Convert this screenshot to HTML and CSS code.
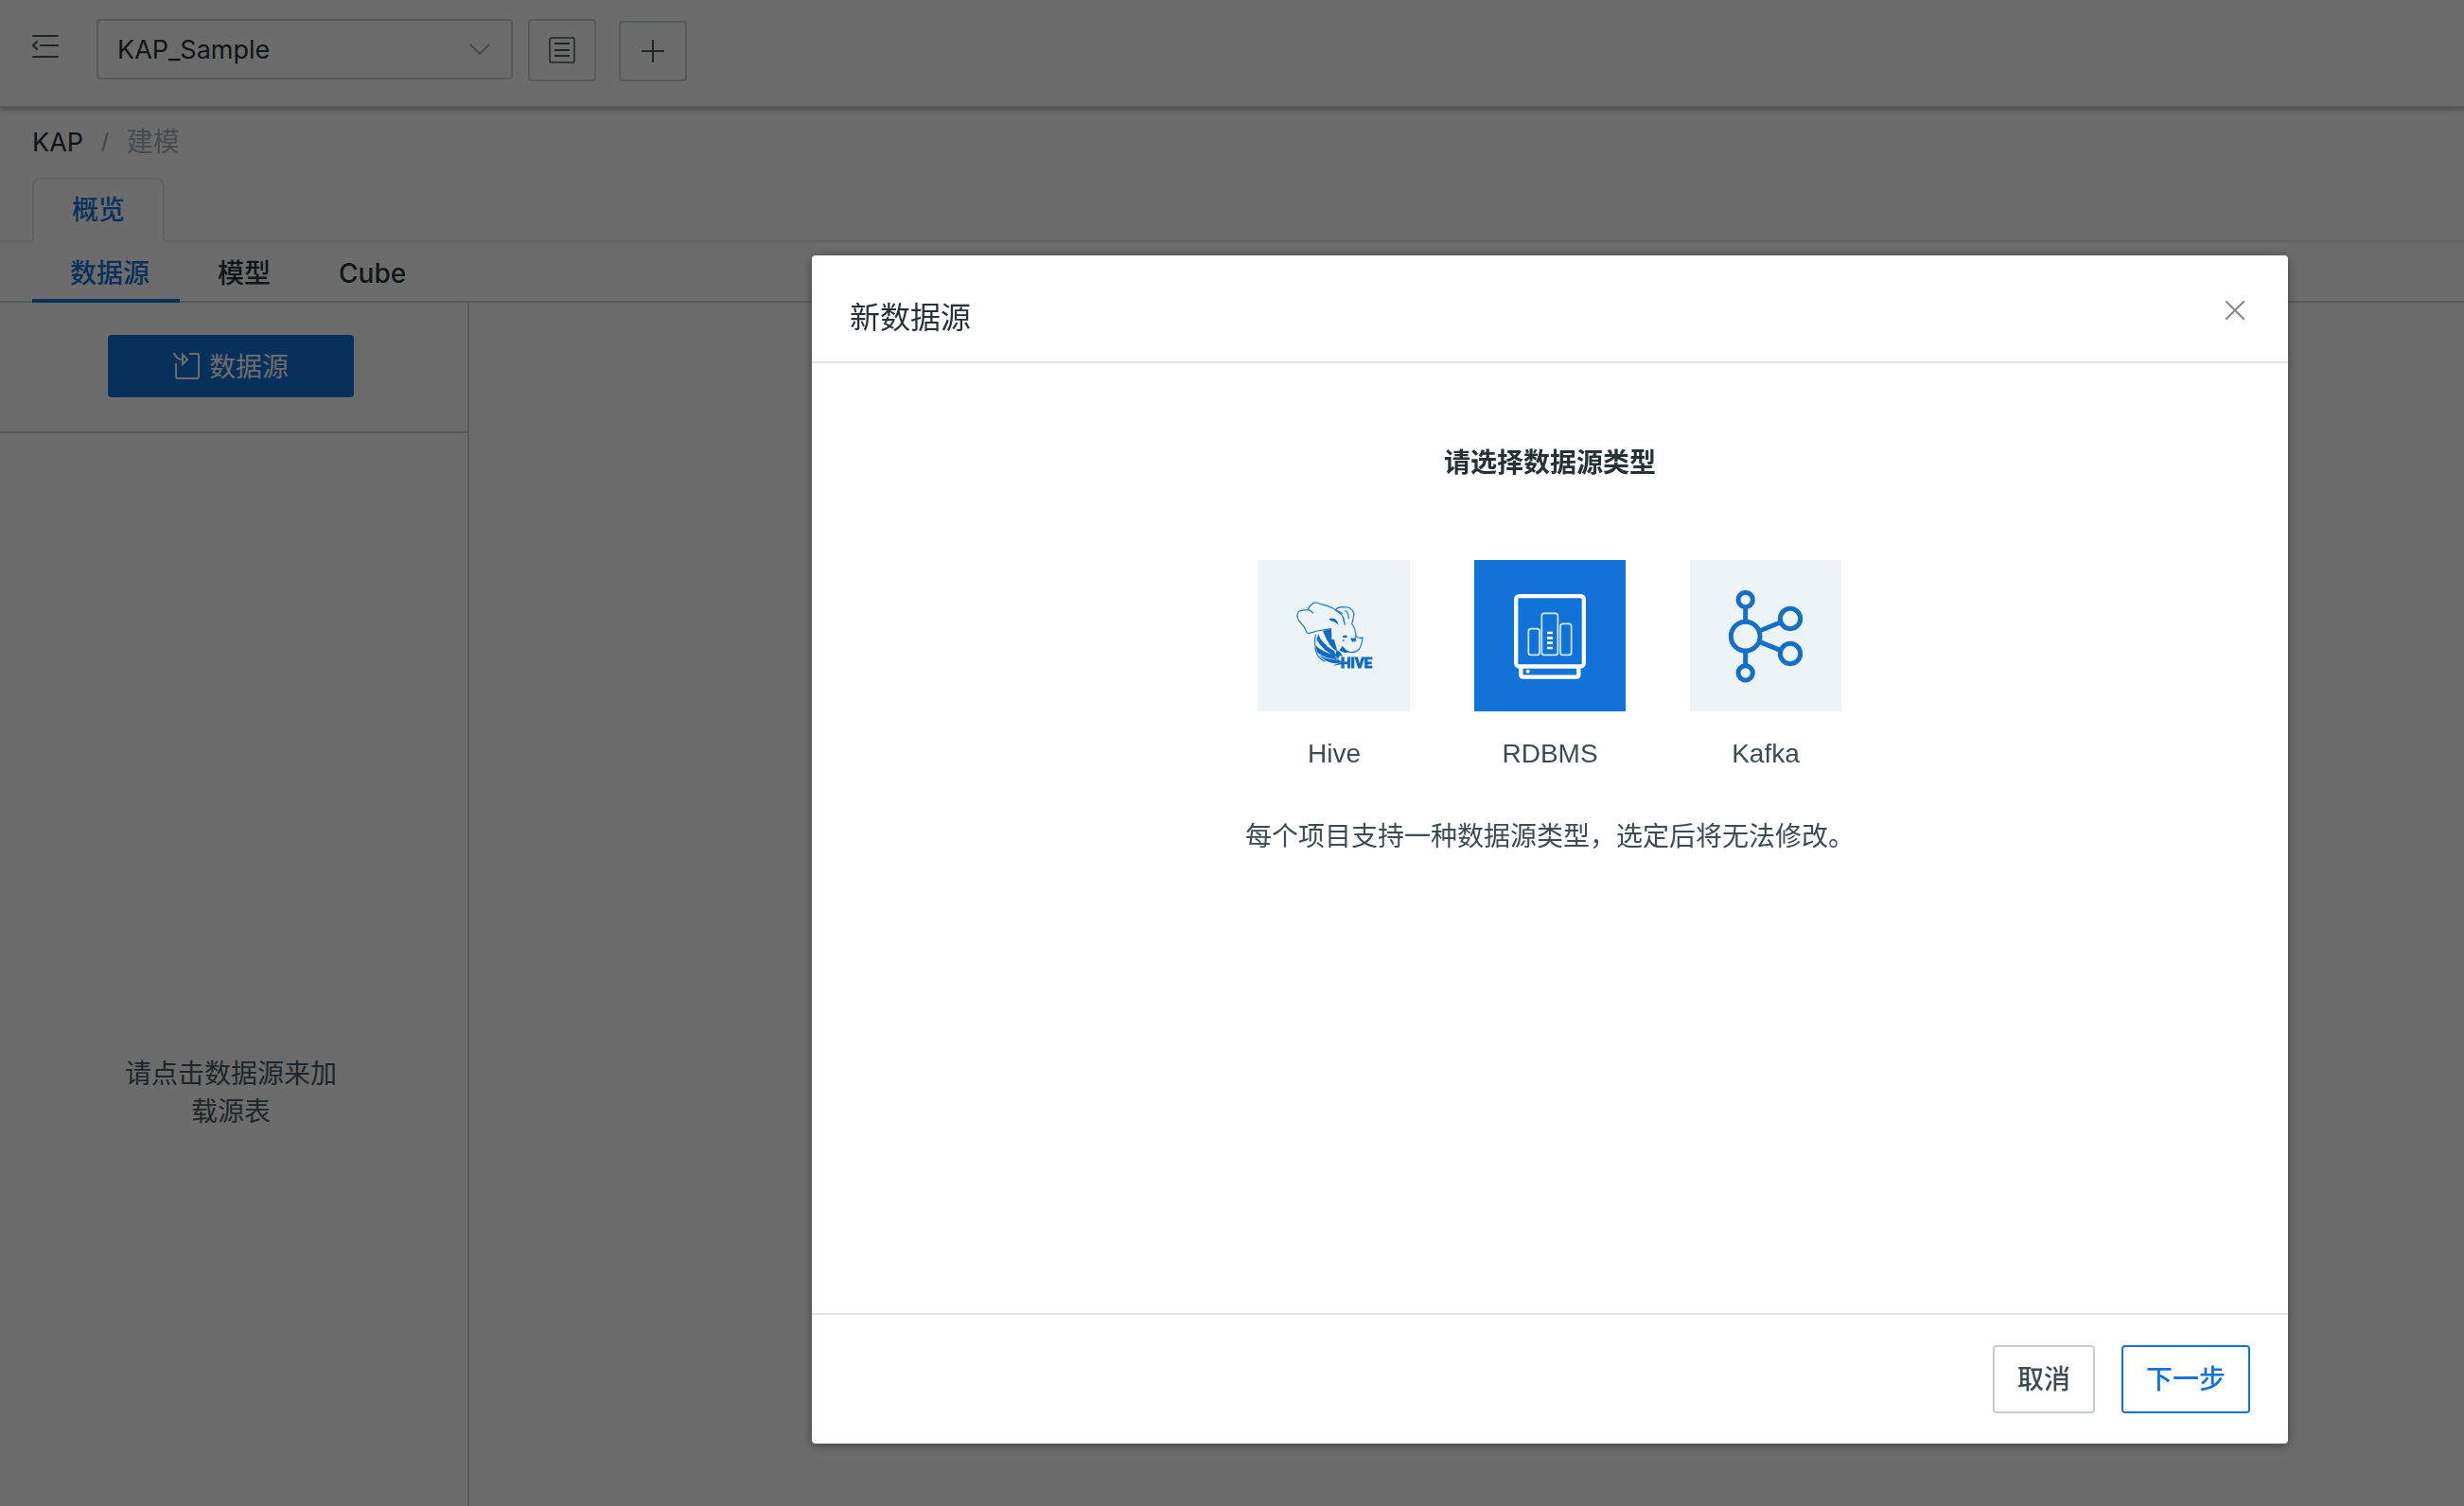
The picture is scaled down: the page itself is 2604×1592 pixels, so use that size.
FILE: index.html
```html
<!DOCTYPE html>
<html lang="zh-CN">
<head>
<meta charset="utf-8">
<title>KAP</title>
<link rel="stylesheet" href="styles.css">
</head>
<body>
<div class="app">
  <header class="topbar">
    <button class="menu-toggle" type="button" aria-label="收起菜单">
      <svg width="28" height="26" viewBox="0 0 28 26" fill="none" stroke="currentColor" stroke-width="2" stroke-linecap="round"><path d="M1 2h26M9 12h18M1 24h26M5 8l-4 4 4 4"/></svg>
    </button>
    <div class="project">
      <select class="project-select" aria-label="项目"><option>KAP_Sample</option></select>
      <svg class="project-arrow" width="22" height="12" viewBox="0 0 22 12" fill="none" stroke="currentColor" stroke-width="2"><path d="M1 1l10 10L21 1"/></svg>
    </div>
    <button class="tool tool-list" type="button" aria-label="项目列表">
      <svg width="28" height="28" viewBox="0 0 28 28" fill="none" stroke="currentColor" stroke-width="2"><rect x="1" y="1" width="26" height="26" rx="2" stroke-width="1.5"/><path d="M6 7h16M6 14h16M6 20h16"/></svg>
    </button>
    <button class="tool tool-add" type="button" aria-label="新建项目">
      <svg width="24" height="24" viewBox="0 0 24 24" fill="none" stroke="currentColor" stroke-width="2"><path d="M12 0v24M0 12h24"/></svg>
    </button>
  </header>

  <nav class="breadcrumb" aria-label="位置">
    <a class="crumb" href="#">KAP</a>
    <span class="crumb-slash">/</span>
    <span class="crumb-current">建模</span>
  </nav>

  <div class="card-tabs"><button class="card-tab" type="button">概览</button></div>

  <nav class="line-tabs">
    <a class="line-tab is-active" href="#">数据源</a>
    <a class="line-tab" href="#">模型</a>
    <a class="line-tab" href="#">Cube</a>
  </nav>

  <main class="workspace">
    <aside class="sidebar">
      <div class="sidebar-head">
        <button class="source-button" type="button">
          <svg width="28" height="30" viewBox="0 0 28 30" fill="none" stroke="currentColor" stroke-width="2"><path d="M17 2h8q2 0 2 2v22q0 2-2 2H5q-2 0-2-2V12M1 1q2 7 9 7V3l5 5-5 5V8"/></svg>
          <span class="source-label">数据源</span>
        </button>
      </div>
      <p class="sidebar-empty">请点击数据源来加载源表</p>
    </aside>
    <section class="canvas"></section>
  </main>
</div>

<div class="overlay">
  <div class="dialog" role="dialog" aria-modal="true" aria-labelledby="dialog-title">
    <div class="dialog-head">
      <h2 class="dialog-title" id="dialog-title">新数据源</h2>
      <button class="dialog-close" type="button" aria-label="关闭">
        <svg width="20" height="20" viewBox="0 0 20 20" fill="none" stroke="currentColor" stroke-width="2"><path d="M0 0l20 20M20 0L0 20"/></svg>
      </button>
    </div>
    <div class="dialog-body">
      <h3 class="prompt">请选择数据源类型</h3>
      <div class="types">
        <button class="type" type="button">
          <svg class="type-icon" viewBox="0 0 160 160" fill="none">
            <g transform="translate(20 23) scale(.33333)" stroke="#1a78d0" stroke-width="3.5" stroke-linejoin="round" stroke-linecap="round">
              <path d="M101 163L94 162Q88 152 85 143L70 126Q58 108 66 96Q70 90 96 89Q100 78 114 67Q122 64 134 70L158 76Q178 83 190 94L204 105Q212 117 212 130M96 89Q108 92 113 99M101 163L126 156L170 149"/>
              <path d="M184 89Q192 80 205 80L223 81Q236 84 243 101Q240 120 236 134Q248 148 249 174M186 91L206 100M216 92Q226 100 226 116M208 112Q212 128 214 136"/>
              <path d="M249 172Q260 182 270 176Q270 195 260 213Q248 226 229 223L205 216M234 181L246 186M247 175L243 190"/>
              <path d="M121 168Q116 195 123 222Q128 242 150 252"/>
              <g fill="#116bc4" stroke="none">
                <path d="M164 117Q180 112 190 126L194 138Q184 126 168 123zM208 170h13v7h-14zM206 184h7l-2 4h-5zM196 218L206 204 218 216 229 223 214 225zM232 178l16 2 3 8-8-2-6 6z"/>
                <path d="M144 156L171 149L172 182Q184 182 181 189L187 209L190 222Q162 205 144 156z"/>
                <path d="M130 166Q137 194 180 220L188 238Q146 222 124 183z"/>
                <path d="M120 201Q143 223 180 232L190 246Q154 246 127 225z"/>
                <path d="M134 233Q160 248 194 247L206 256L184 259Q151 255 134 233z"/>
                <path d="M176 266Q194 255 214 253L202 262zM188 216l12 8 8 14-10-4-6 12-8-12z"/>
              </g>
            </g>
            <text class="hive-word" x="87" y="114">HIVE</text>
          </svg>
          <span class="type-name">Hive</span>
        </button>
        <button class="type is-selected" type="button">
          <svg class="type-icon" viewBox="0 0 160 160" fill="none">
            <g transform="translate(2 3) scale(.33333)" stroke="#fff">
              <rect x="126.500" y="105.500" width="215" height="223" rx="10" stroke-width="13"/>
              <path d="M142 334v20q0 8 8 8h167q8 0 8-8v-20" stroke-width="13"/>
              <g stroke-width="5" stroke="#d6ebfa"><rect x="166" y="209" width="35" height="83" rx="8"/><rect x="208" y="160" width="51" height="132" rx="8"/><rect x="267" y="193" width="35" height="99" rx="8"/></g>
              <path d="M225 222h18M225 238h18M225 254h18M225 270h18" stroke-width="8"/>
              <circle cx="164" cy="344" r="6" fill="#fff" stroke="none"/>
            </g>
          </svg>
          <span class="type-name">RDBMS</span>
        </button>
        <button class="type" type="button">
          <svg class="type-icon" viewBox="0 0 160 160" fill="none">
            <g transform="translate(-6 -2) scale(.33333)" stroke="#156fca" stroke-width="15">
              <circle cx="194" cy="132" r="23"/><circle cx="194" cy="248" r="46"/><circle cx="194" cy="364" r="23"/><circle cx="336" cy="192" r="32"/><circle cx="336" cy="303" r="32"/>
              <path d="M194 157v44M194 295v44M238 231l66-27M238 265l66 27"/>
            </g>
          </svg>
          <span class="type-name">Kafka</span>
        </button>
      </div>
      <p class="note">每个项目支持一种数据源类型，选定后将无法修改。</p>
    </div>
    <div class="dialog-foot">
      <button class="btn" type="button">取消</button>
      <button class="btn btn-primary" type="button">下一步</button>
    </div>
  </div>
</div>
</body>
</html>
```
FILE: styles.css
```css
* { box-sizing: border-box; }

:root {
  --blue: #1173d7;
  --ink: #263238;
  --text: #3b4c55;
  --line: #cbd4d9;
}

body {
  margin: 0;
  background: #fff;
  color: var(--text);
  font-family: "Liberation Sans", "Noto Sans CJK SC", sans-serif;
  font-size: 28px;
  line-height: 40px;
}

button, select { font: inherit; color: inherit; }
button { cursor: pointer; }
a { color: inherit; text-decoration: none; }
h2, h3, p { margin: 0; }
svg { display: block; flex: none; }

.app {
  display: flex;
  flex-direction: column;
  min-height: 100vh;
}

/* top bar */
.topbar {
  display: flex;
  align-items: flex-start;
  height: 114px;
  padding: 20px 34px;
  border-bottom: 2px solid var(--line);
  box-shadow: 0 2px 6px rgba(0, 0, 0, .3);
}
.menu-toggle {
  margin: 16px 40px 0 0;
  padding: 0;
  border: 0;
  background: none;
  color: #455a64;
}
.project { position: relative; width: 440px; margin-right: 16px; }
.project-select {
  display: block;
  width: 100%;
  height: 64px;
  padding: 2px 20px 0;
  appearance: none;
  border: 2px solid var(--line);
  border-radius: 4px;
  background: #fff;
  color: var(--ink);
  font-family: Inter, sans-serif;
  font-size: 27px;
}
.project-arrow { position: absolute; right: 24px; top: 26px; color: #a4b4bc; }
.tool {
  display: flex;
  align-items: center;
  justify-content: center;
  width: 72px;
  height: 66px;
  padding: 0;
  border: 2px solid var(--line);
  border-radius: 4px;
  background: #fff;
  color: #455a64;
}
.tool-list { margin-right: 24px; }
.tool-add { height: 64px; margin-top: 2px; }

/* breadcrumb and tabs */
.breadcrumb {
  display: flex;
  gap: 19px;
  padding: 17px 34px;
  color: #a4b4bc;
}
.crumb { color: var(--ink); font-family: Inter, sans-serif; font-size: 27px; }
.card-tabs {
  display: flex;
  height: 68px;
  padding: 0 34px;
  border-bottom: 2px solid #e8e6f0;
}
.card-tab {
  width: 140px;
  height: 68px;
  padding: 2px 0 0;
  border: 2px solid #e8e6f0;
  border-bottom-color: #fff;
  border-radius: 8px 8px 0 0;
  background: #fff;
  color: var(--blue);
  font-weight: 500;
}
.line-tabs {
  display: flex;
  height: 64px;
  padding: 0 34px;
  border-bottom: 2px solid var(--line);
}
.line-tab {
  height: 64px;
  padding: 13px 32px 0 40px;
  color: var(--ink);
  font-family: Inter, "Noto Sans CJK SC", sans-serif;
  font-weight: 500;
}
.line-tab.is-active { border-bottom: 4px solid var(--blue); color: var(--blue); }

/* workspace */
.workspace { display: flex; flex: 1; }
.canvas { flex: 1; }
.sidebar { width: 496px; border-right: 2px solid var(--line); }
.sidebar-head {
  padding: 34px 120px 36px 114px;
  border-bottom: 2px solid var(--line);
}
.source-button {
  display: flex;
  align-items: center;
  justify-content: center;
  gap: 10px;
  width: 100%;
  height: 66px;
  border: 0;
  border-radius: 4px;
  background: var(--blue);
  color: #fff;
}
.source-label { padding-top: 4px; }
.sidebar-empty {
  width: 228px;
  margin: 658px 0 0 130px;
  text-align: center;
  color: #455a64;
}

/* dialog */
.overlay {
  position: fixed;
  inset: 0;
  display: flex;
  padding: 270px 186px 66px 858px;
  background: rgba(0, 0, 0, .575);
}
.dialog {
  display: flex;
  flex: 1;
  flex-direction: column;
  border-radius: 4px;
  background: #fff;
  box-shadow: 0 2px 12px rgba(0, 0, 0, .4);
}
.dialog-head {
  display: flex;
  align-items: flex-start;
  justify-content: space-between;
  height: 114px;
  padding: 46px 46px 0 40px;
  border-bottom: 2px solid #dfe2eb;
}
.dialog-title { color: var(--ink); font-size: 32px; font-weight: 400; }
.dialog-close {
  margin-top: 2px;
  padding: 0;
  border: 0;
  background: none;
  color: #85868f;
}
.dialog-body {
  display: flex;
  flex: 1;
  flex-direction: column;
  align-items: center;
  padding-top: 86px;
}
.prompt { color: var(--ink); font-size: 28px; font-weight: 700; }
.types { display: flex; gap: 68px; margin: 82px 0 48px; }
.type {
  display: flex;
  flex-direction: column;
  gap: 25px;
  width: 160px;
  padding: 0;
  border: 0;
  background: none;
  text-align: center;
}
.type-icon { width: 160px; height: 160px; background: #ecf4f8; }
.type.is-selected .type-icon { background: var(--blue); }
.hive-word {
  fill: #116bc4;
  stroke: #116bc4;
  stroke-width: 1px;
  font: bold 15px Roboto, "Liberation Sans", sans-serif;
}
.dialog-foot {
  display: flex;
  justify-content: flex-end;
  gap: 28px;
  padding: 32px 40px;
  border-top: 2px solid #dde2e8;
}
.btn {
  height: 72px;
  padding: 2px 24px 0;
  border: 2px solid #c5ced3;
  border-radius: 4px;
  background: #fff;
  font-weight: 500;
}
.btn-primary { border-color: var(--blue); color: var(--blue); }
```
